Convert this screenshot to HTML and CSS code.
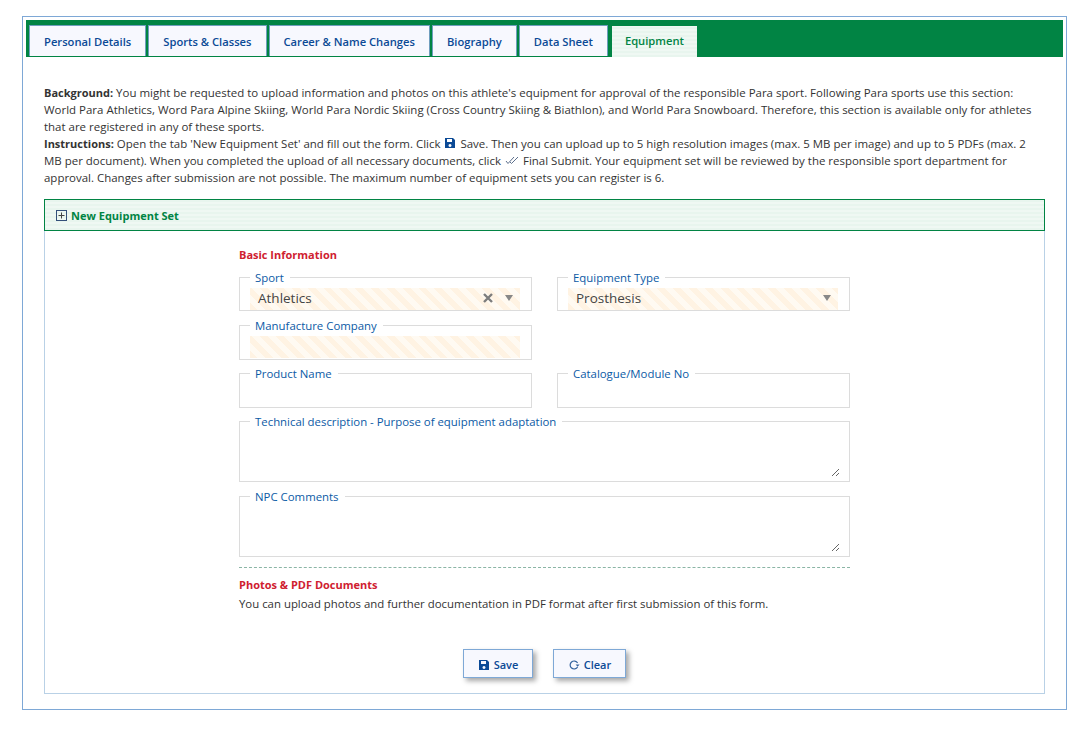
FILE: index.html
```html
<!DOCTYPE html>
<html lang="en">
<head>
    <meta charset="UTF-8">
    <title>Equipment</title>
    <link rel="stylesheet" href="styles.css">
</head>
<body>
<div class="frame">
    <div class="tabbar">
        <a class="tab">Personal Details</a>
        <a class="tab">Sports &amp; Classes</a>
        <a class="tab">Career &amp; Name Changes</a>
        <a class="tab">Biography</a>
        <a class="tab">Data Sheet</a>
        <a class="tab active">Equipment</a>
    </div>

    <div class="content">
        <div class="intro">
            <p><strong>Background:</strong> You might be requested to upload information and photos on this athlete's equipment for approval of the responsible Para sport. Following Para sports use this section: World Para Athletics, Word Para Alpine Skiing, World Para Nordic Skiing (Cross Country Skiing &amp; Biathlon), and World Para Snowboard. Therefore, this section is available only for athletes that are registered in any of these sports.</p>
            <p><strong>Instructions:</strong> Open the tab 'New Equipment Set' and fill out the form. Click
                <svg class="icon-inline" viewBox="0 0 12 12"><path fill="#0b4a96" fill-rule="evenodd" d="M1 1h8l2 2v8H1zM3 2v3h5V2zM6 7a1.5 1.5 0 1 0 .01 0z"/></svg>
                Save. Then you can upload up to 5 high resolution images (max. 5 MB per image) and up to 5 PDFs (max. 2 MB per document). When you completed the upload of all necessary documents, click
                <svg class="icon-inline wide" viewBox="0 0 14 10"><path fill="none" stroke="#5c6f8c" stroke-width="1" d="M1 6l2 2.5L9 2M5 7l1.5 1.5L13 2"/></svg>
                Final Submit. Your equipment set will be reviewed by the responsible sport department for approval. Changes after submission are not possible. The maximum number of equipment sets you can register is 6.</p>
        </div>

        <div class="panel">
            <div class="panel-head">
                <svg class="plus" viewBox="0 0 11 11"><rect x="0.5" y="0.5" width="10" height="10" fill="none" stroke="#33507a"/><path stroke="#444" d="M5.5 2.5v6M2.5 5.5h6"/></svg>
                New Equipment Set
            </div>
            <div class="panel-body">
                <form class="form">
                    <h3 class="section-title first">Basic Information</h3>
                    <div class="row">
                        <fieldset class="field">
                            <legend>Sport</legend>
                            <div class="required combo">
                                <span class="combo-value">Athletics</span>
                                <svg class="clear-x" viewBox="0 0 10 10"><path stroke="#7d7d7d" stroke-width="2.4" d="M1 1l8 8M9 1l-8 8"/></svg>
                                <span class="caret"></span>
                            </div>
                        </fieldset>
                        <fieldset class="field">
                            <legend>Equipment Type</legend>
                            <div class="required combo">
                                <span class="combo-value">Prosthesis</span>
                                <span class="caret"></span>
                            </div>
                        </fieldset>
                    </div>
                    <div class="row tall">
                        <fieldset class="field">
                            <legend>Manufacture Company</legend>
                            <div class="required"></div>
                        </fieldset>
                    </div>
                    <div class="row tall">
                        <fieldset class="field">
                            <legend>Product Name</legend>
                            <input type="text" class="plain">
                        </fieldset>
                        <fieldset class="field">
                            <legend>Catalogue/Module No</legend>
                            <input type="text" class="plain">
                        </fieldset>
                    </div>
                    <fieldset class="field area">
                        <legend>Technical description - Purpose of equipment adaptation</legend>
                        <textarea></textarea>
                    </fieldset>
                    <fieldset class="field area">
                        <legend>NPC Comments</legend>
                        <textarea></textarea>
                    </fieldset>
                    <div class="divider"></div>
                    <h3 class="section-title">Photos &amp; PDF Documents</h3>
                    <p class="note">You can upload photos and further documentation in PDF format after first submission of this form.</p>
                    <div class="actions">
                        <button type="button" class="btn save">
                            <svg viewBox="0 0 12 12"><path fill="#0b4a96" fill-rule="evenodd" d="M1 1h8l2 2v8H1zM3 2v3h5V2zM6 7a1.5 1.5 0 1 0 .01 0z"/></svg>
                            Save
                        </button>
                        <button type="button" class="btn clear">
                            <svg viewBox="0 0 12 12"><path fill="none" stroke="#33629e" stroke-width="1.2" d="M9.6 4A4 4 0 1 0 9.6 8"/><path fill="#33629e" d="M7.6 5.5h4L9.6 7.8z"/></svg>
                            Clear
                        </button>
                    </div>
                </form>
            </div>
        </div>
    </div>
</div>
</body>
</html>
```

FILE: styles.css
```css
* {
    box-sizing: border-box;
}
body {
    margin: 0;
    background-color: white;
    font-family: "Open Sans", "Noto Sans", sans-serif;
    font-size: 11.4px;
    color: #333;
}
.frame {
    margin: 16px 21px 20px 22px;
    padding: 3px;
    height: 694px;
    border: 1px solid #7ea8d6;
}
.tabbar {
    display: flex;
    gap: 2px;
    height: 37px;
    padding: 5px 0 0 3px;
    background-color: #018444;
}
.tab {
    height: 31px;
    padding: 0 14px;
    line-height: 31px;
    font-size: 11.2px;
    font-weight: 600;
    color: #0b4a96;
    background-color: #f7f8fe;
    border: 1px solid #6f9dbd;
    border-bottom: 0;
}
.tab.active {
    margin: 1px 0 0 2px;
    padding: 0 13px;
    line-height: 29px;
    color: #018444;
    border: 0;
    background: repeating-linear-gradient(0deg, #e8f5ee 0, #e8f5ee 2px, #eff8f3 2px, #eff8f3 4px);
}
.content {
    padding: 0 18px;
}
.intro {
    padding: 27px 9px 0 0;
    font-size: 11.47px;
    line-height: 17px;
}
.intro p {
    margin: 0;
}
.intro strong {
    font-size: 11px;
    font-weight: 700;
}
.icon-inline {
    width: 12px;
    height: 12px;
    margin: 0 1px;
    vertical-align: -1px;
}
.icon-inline.wide {
    width: 14px;
    height: 10px;
    vertical-align: 0;
}
.panel {
    margin-top: 13px;
    height: 495px;
    border: 1px solid #b9d1e6;
    border-top: 0;
}
.panel-head {
    display: flex;
    align-items: center;
    gap: 4px;
    height: 32px;
    margin: 0 -1px;
    padding-left: 11px;
    font-size: 11px;
    font-weight: 700;
    color: #018444;
    border: 1px solid #018444;
    background: repeating-linear-gradient(0deg, #e8f5ee 0, #e8f5ee 2px, #eff8f3 2px, #eff8f3 4px);
}
.plus {
    width: 11px;
    height: 11px;
}
.panel-body {
    padding-top: 16px;
}
.form {
    width: 611px;
    margin-left: 194px;
}
.section-title {
    margin: 9px 0 0;
    font-size: 11px;
    line-height: 16px;
    font-weight: 700;
    color: #cf2030;
}
.section-title.first {
    margin: 0 0 8px;
}
.row {
    display: flex;
    gap: 25px;
    height: 48px;
}
.field {
    width: 293px;
    height: 40px;
    min-width: 0;
    margin: 0;
    padding: 4px 11px 0 10px;
    border: 1px solid #dcdcdc;
}
.row.tall .field {
    height: 41px;
}
.field legend {
    padding: 0 6px 0 5px;
    height: 13px;
    line-height: 13px;
    color: #0b5aa5;
}
.required {
    height: 22px;
    background: repeating-linear-gradient(45deg, #fff3e3 0, #fff3e3 5.6px, #fffaf2 5.6px, #fffaf2 11.2px);
}
.combo {
    display: flex;
    align-items: center;
    padding: 0 7px 2px 8px;
    font-size: 13.5px;
    color: #444;
}
.combo-value {
    flex: 1;
}
.clear-x {
    width: 10px;
    height: 10px;
    margin-right: 12px;
}
.caret {
    width: 0;
    height: 0;
    border-left: 4px solid transparent;
    border-right: 4px solid transparent;
    border-top: 6px solid #888;
}
.plain {
    display: block;
    width: 100%;
    height: 22px;
    border: 0;
    background: transparent;
}
.field.area {
    width: 611px;
    height: 67px;
    margin-bottom: 8px;
    padding-right: 9px;
}
.field.area textarea {
    display: block;
    width: 100%;
    height: 45px;
    border: 0;
    outline: none;
    resize: vertical;
    background: transparent;
}
.divider {
    margin-top: 10px;
    border-top: 1px dashed #8bb5a5;
}
.note {
    margin: 2px 0 0;
    line-height: 17px;
}
.actions {
    display: flex;
    justify-content: center;
    gap: 20px;
    margin-top: 37px;
}
.btn {
    display: flex;
    align-items: center;
    justify-content: center;
    gap: 4px;
    height: 29px;
    padding: 2px 6px 0;
    font-family: inherit;
    font-size: 11px;
    font-weight: 600;
    color: #0b4a96;
    background-color: #f7f8fe;
    border: 1px solid #7ea8d6;
    box-shadow: 3px 3px 5px rgba(0,0,0,0.35);
}
.btn svg {
    width: 12px;
    height: 12px;
}
.btn.save {
    width: 70px;
}
.btn.clear {
    width: 73px;
}
```
